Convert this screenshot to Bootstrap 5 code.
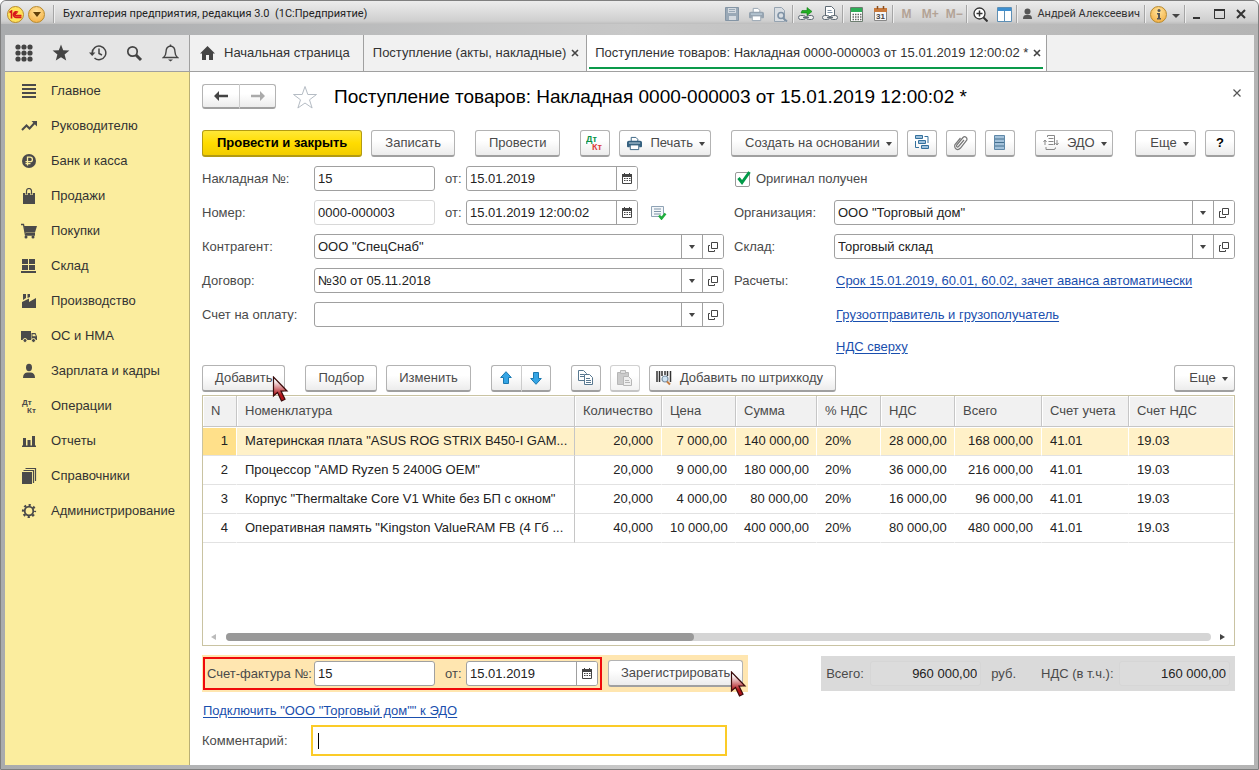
<!DOCTYPE html>
<html lang="ru">
<head>
<meta charset="utf-8">
<meta name="viewport" content="width=device-width, initial-scale=1">
<title>Бухгалтерия предприятия, редакция 3.0</title>
<link href="https://cdn.jsdelivr.net/npm/bootstrap@5.3.0/dist/css/bootstrap.min.css" rel="stylesheet">
<style>
:root{--ink:#4a4a4a;--line:#a0a0a0;--olive:#c9c3a2;--ui:"Liberation Sans",Arial,sans-serif}
body{font:13px/16px var(--ui);color:#333;background:#fff}
svg{display:block;flex:none}
button{font-family:var(--ui)}
.frame{min-height:100vh;border:1px solid #7f7f7f;border-radius:6px 6px 0 0;padding:0 4px 4px;background:linear-gradient(90deg,#a9abad,#c8c8c8 50%,#b4b4b4)}
.titlebar{height:34px;margin:0 -4px;padding:0 6px 8px;border-radius:5px 5px 0 0;background:linear-gradient(180deg,#ececec 0,#cfcfcf 20px,#bdbdbd 23px,transparent 23px);color:#222;font:11px/16px Roboto,sans-serif}
.round{width:17px;height:17px;border-radius:50%;border:1px solid #b88a2c;background:radial-gradient(circle at 50% 30%,#ffe39a,#f2a93a);display:flex;align-items:center;justify-content:center;padding:0}
.vsep{width:1px;height:18px;background:#a5a5a5;border-right:1px solid #eee;box-sizing:content-box}
.tbtn{border:0;background:none;padding:0;width:24px;height:20px;display:flex;align-items:center;justify-content:center;color:#333;font-family:Roboto,sans-serif}
.win{width:22px}
.mem{font:bold 12px/16px var(--ui);color:#b3a396}
.tabs{background:#f1f1f1;border-bottom:1px solid var(--line);height:37px}
.tools{width:184px;background:#e5e5e5;color:var(--ink)}
.tab{border-left:1px solid var(--line);padding:0 7px 0 9px;gap:5px;color:#333;white-space:nowrap;text-decoration:none}
.tab.home{padding:0 13px 0 10px}
.tab.on{background:#fff;border-right:1px solid var(--line);position:relative;padding:0 5px 0 8px}
.tab.on::after{content:"";position:absolute;left:2px;right:3px;bottom:2px;height:2px;background:#0a9a4a}
.xbtn{border:0;background:none;padding:0;color:#444}
.side{width:185px;background:#fbed9e;border-right:1px solid #b9af75;padding-top:1px}
.side a{height:35px;padding-left:16px;gap:14px;color:#333;text-decoration:none}
.side svg{color:var(--ink)}
.page{background:#fff;padding:12px 19px 9px 12px;min-width:0}
.b{height:27px;padding:0 13px;border:1px solid #b3b3b3;border-bottom:2px solid #a0a0a0;border-radius:3px;background:linear-gradient(#fff 40%,#ececec);color:var(--ink);white-space:nowrap;display:inline-flex;align-items:center;justify-content:center;gap:8px;font-size:13px;line-height:16px;position:relative}
.b.sq{width:30px;padding:0;color:#000}
.b.tight{padding:0 12px}
.b.main{padding:0 14px;background:linear-gradient(#ffe838,#ffdc00 50%,#f2cd00);border-color:#b39b12;color:#000;font-weight:bold}
.b.dropdown-toggle::after{margin:2px 0 0 -2px;border-top:4px solid #444;border-left:3px solid transparent;border-right:3px solid transparent}
.b.dropdown-toggle{padding:0 5px 0 13px}
.b.more{min-width:61px}
.b:disabled{opacity:.6}
.pair .b:first-child{border-radius:3px 0 0 3px;border-right:0}
.pair .b:last-child{border-radius:0 3px 3px 0;border-left-color:#ccc}
.nav2 .b{width:37px;height:25px;padding:0}
h1{font:19px/24px var(--ui);color:#000;margin:0;white-space:nowrap}
.formgrid{display:grid;grid-template-columns:522fr 501fr;column-gap:10px}
.stack9{display:flex;flex-direction:column;gap:9px}
.frow{display:flex;align-items:center;height:25px}
.frow>label,.frow>.cap{color:var(--ink);flex:none;white-space:nowrap}
.l1{width:112px}.l2{width:100px}.ot{width:31px;padding-left:10px}
.fld{display:flex;height:25px;border:1px solid var(--line);border-radius:3px;background:#fff;overflow:hidden}
.fld.ro{border-color:#d8d8d8}
.fld input{border:0;padding:0 3px;flex:1;min-width:0;width:0;outline:0;background:transparent;color:#222}
.fld button{width:20px;border:0;border-left:1px solid var(--line);background:#fff;padding:0;display:flex;align-items:center;justify-content:center;color:#444;flex:none;box-sizing:content-box}
.num{width:121px;flex:none}.date{width:172px;flex:none}
.car{border-top:4px solid #444;border-left:3px solid transparent;border-right:3px solid transparent}
.lnk{color:#1a4fae;text-decoration:underline;text-underline-offset:2px}
.chk{appearance:none;width:17px;height:18px;margin:0 4px 2px 1px;background:url("data:image/svg+xml,%3Csvg xmlns='http://www.w3.org/2000/svg' width='17' height='18'%3E%3Crect x='.5' y='3.5' width='14' height='14' rx='1.5' fill='white' stroke='%23999'/%3E%3Cpath d='M3.5 9l3.5 4.5L14.500 3' fill='none' stroke='%23009a48' stroke-width='3'/%3E%3C/svg%3E") no-repeat}
.gridbox{border:1px solid var(--olive);display:flex;flex-direction:column;flex:1;min-height:251px}
.gridbox table{table-layout:fixed;width:100%;border-collapse:separate;border-spacing:0;margin:0}
.gridbox th{height:31px;background:#f1f1f1;font-weight:normal;color:var(--ink);border-right:1px solid #c6c6c6;border-bottom:1px solid #c6c6c6;box-shadow:inset 1px 1px #fff;padding:0 8px;white-space:nowrap}
.gridbox td{height:29px;padding:0 8px;border-bottom:1px solid #e2e2e2;border-right:1px solid transparent;white-space:nowrap;color:#222}
.gridbox td:nth-child(2){border-right-color:#c6c6c6;padding-right:0}
.gridbox th:last-child{border-right-color:#fff}
.gridbox .sel td{background:#fff1c8;border-right-color:#fff;box-shadow:inset 0 1px #fff}
.gridbox .sel td:nth-child(2){border-right-color:#c6c6c6}
.gridbox .sel td:first-child{background:#ffe08a}
.hbar{height:16px;gap:9px;padding:0 8px}
.track{height:8px;border-radius:4px;background:#d5d5d5;flex:1}
.thumb{height:8px;border-radius:4px;background:#999}
.reg{background:#ffe6b0;height:37px;padding:0 5px 0 1px;gap:6px}
.redbox{border:2px solid #f00a0a;height:33px;padding:0 2px}
.totals{background:#dadada;height:35px;padding:0 5px;color:var(--ink)}
.totals input{width:111px;height:25px;border:1px solid #d6d6d6;border-radius:3px;background:#dcdcdc;text-align:right;padding:0 3px;color:#222}
.comment{width:416px;height:31px;border:2px solid #fbcb28;outline:0;padding:0 6px;background:linear-gradient(#000,#000) 5px 50%/1px 16px no-repeat #fff;caret-color:transparent}
.cur{position:absolute;z-index:2;right:-5px;top:10px;pointer-events:none}
</style>
</head>
<body>
<svg width="0" height="0" class="position-absolute" aria-hidden="true">
<defs>
<linearGradient id="redg" x1="0" y1="0" x2="0" y2="1"><stop offset=".15" stop-color="#fff"/><stop offset=".75" stop-color="#b01218"/></linearGradient>
<symbol id="cursor" viewBox="0 0 17 28"><path d="M1.500 1v19l4-3.500 4 8.500 3.500-1.700-4-8.300h6z" fill="url(#redg)" stroke="#3a0a0a" stroke-width="1.200"/></symbol>
<symbol id="cal" viewBox="0 0 10 11"><path d="M.5 1.500h9v9h-9z" fill="#fff" stroke="#444"/><path d="M0 1h10v3H0zM2 0h1v2H2zM7 0h1v2H7z" fill="#444"/><path d="M2 5.500h6.500M2 7.500h6.500" stroke="#444" stroke-dasharray="1.500 1"/></symbol>
<symbol id="open" viewBox="0 0 10 10"><path d="M3.500.5h6v6h-6zM2 3.500H.5v6h6V8" fill="none" stroke="#444"/></symbol>
<symbol id="x" viewBox="0 0 8 8"><path d="M1 1l6 6M7 1L1 7" stroke="currentColor" stroke-width="1.600"/></symbol>
<symbol id="printer" viewBox="0 0 16 16"><path d="M4.500 6V1.500h5l2 2V6" fill="#fff" stroke="currentColor"/><path d="M2 5h12q2 0 2 2v4q0 1-1 1h-2v-2H3v2H1q-1 0-1-1V7q0-2 2-2z" fill="currentColor"/><path d="M3.500 9.500h9v5h-9z" fill="#fff" stroke="currentColor"/><path d="M2 7.500h12" stroke="#cfe0ec"/></symbol>
<symbol id="uarr" viewBox="0 0 12 14"><path d="M6 .7L11.300 6.500H8.500v6h-5v-6H.7z" fill="#35a5e5" stroke="#1a78b0"/></symbol>
<symbol id="link" viewBox="0 0 16 16"><rect x=".5" y="9.500" width="7" height="4" rx="2" fill="#eee" stroke="#5f6b75"/><rect x="8.500" y="9.500" width="7" height="4" rx="2" fill="#eee" stroke="#5f6b75"/><path d="M5 11.500h6" stroke="#5f6b75" stroke-width="1.500"/></symbol>
</defs></svg>

<div class="frame d-flex flex-column">
<header class="titlebar d-flex align-items-center">
 <span class="round" style="background:#ffe25a"><svg width="13" height="9" viewBox="0 0 13 9" fill="none" stroke="#d8161b" stroke-width="1.600"><path d="M.5 2.500L2.500 1v7.500M9 2.200A2.900 2.900 0 1 0 7 7.500h5.500M8 3.500A1.200 1.200 0 1 0 7 5.600h5.500"/></svg></span>
 <button class="round ms-1" aria-label="Меню"><svg width="8" height="5"><path d="M0 0h8L4 5z" fill="#60400a"/></svg></button>
 <span class="vsep ms-2"></span>
 <span class="ms-2 flex-grow-1">Бухгалтерия предприятия, редакция 3.0&nbsp; (1С:Предприятие)</span>
 <button class="tbtn" aria-label="Сохранить"><svg width="14" height="14"><path d="M.5.5h13v13H.5z" fill="#9aa9b7" stroke="#8495a5"/><path d="M3 1h8v5H3zM4 9h7v4H4z" fill="#d4dae0"/><path d="M4 2.500h6M4 4.500h6" stroke="#9aa9b7"/></svg></button>
 <button class="tbtn" aria-label="Печать" style="color:#95a3b0"><svg width="15" height="15"><use href="#printer"/></svg></button>
 <button class="tbtn" aria-label="Просмотр"><svg width="15" height="15" fill="none" stroke="#95a3b0"><path d="M1.500.5h7l3 3v11h-10z" fill="#d9dee3"/><circle cx="8" cy="8.500" r="3" stroke="#7f92a5" stroke-width="1.600"/><path d="M10 11l4 3.500" stroke="#7f92a5" stroke-width="2"/></svg></button>
 <span class="vsep"></span>
 <button class="tbtn" aria-label="Ссылка"><svg width="16" height="16"><use href="#link"/><path d="M4 4.500h5V1.500l5 4-5 4V7H3z" fill="#22b022" stroke="#0d7a16" stroke-width=".6"/></svg></button>
 <button class="tbtn" aria-label="Получить ссылку"><svg width="16" height="16"><path d="M3.500.5h6l3 3v7h-9z" fill="#fff" stroke="#5f6b75"/><path d="M5.500 4.500h4M5.500 6.500h5" stroke="#7f92a5"/><use href="#link"/></svg></button>
 <span class="vsep"></span>
 <button class="tbtn" aria-label="Калькулятор"><svg width="13" height="15"><path d="M.5.5h12v14H.5z" fill="#fff" stroke="#6d7d70"/><path d="M1 1h11v4H1z" fill="#2cae56"/><path d="M2.500 7.500h9M2.500 10h9M2.500 12.500h9" stroke="#666" stroke-width="1.400" stroke-dasharray="1.500 1"/></svg></button>
 <button class="tbtn" aria-label="Календарь"><svg width="13" height="16"><path d="M.5 2.500h12v12H.5z" fill="#f7f7f7" stroke="#888"/><path d="M0 2h13v4H0z" fill="#c9793a"/><path d="M3.500 0v3M9.500 0v3" stroke="#8a5020" stroke-width="1.500"/><text x="2" y="13" font-size="8" font-weight="bold" font-family="Liberation Sans" fill="#444">31</text></svg></button>
 <span class="vsep"></span>
 <button class="tbtn mem">M</button><button class="tbtn mem">M+</button><button class="tbtn mem">M−</button>
 <span class="vsep"></span>
 <button class="tbtn" aria-label="Масштаб"><svg width="15" height="15" fill="none" stroke="#333"><circle cx="6.500" cy="6.500" r="5.500" fill="#fff" stroke-width="1.300"/><path d="M10.500 10.500l4 4" stroke-width="2"/><path d="M3.500 6.500h6M6.500 3.500v6" stroke-width="1.500"/></svg></button>
 <button class="tbtn" aria-label="Панели"><svg width="15" height="15"><path d="M.5.5h14v14H.5z" fill="#fff" stroke="#5d8fb5"/><path d="M1 1h13v3H1z" fill="#3d8fd0"/><path d="M7.500 4v10" stroke="#5d8fb5"/></svg></button>
 <span class="vsep"></span>
 <button class="tbtn w-auto ms-1"><svg width="11" height="12" fill="#555" class="me-1"><circle cx="5.500" cy="3.500" r="3"/><path d="M1 11q0-4 3-4h3q3 0 3 4z"/></svg>Андрей Алексеевич</button>
 <span class="vsep ms-1 me-1"></span>
 <button class="round" aria-label="О программе"><svg width="6" height="11" fill="#555"><circle cx="3" cy="1.500" r="1.500"/><path d="M1 4h3v5h1v1.500H1V9h1V5.500H1z"/></svg></button>
 <button class="tbtn" style="width:17px" aria-label="Ещё"><svg width="8" height="8"><path d="M0 4h8L4 8z" fill="#444"/></svg></button>
 <span class="vsep"></span>
 <button class="tbtn win" aria-label="Свернуть"><svg width="8" height="10"><path d="M0 8h7v2H0z" fill="#333"/></svg></button>
 <button class="tbtn win" aria-label="Развернуть"><svg width="11" height="10"><path d="M.5 1h10v8.500H.5z" fill="none" stroke="#333"/><path d="M0 0h11v2H0z" fill="#333"/></svg></button>
 <button class="tbtn win" aria-label="Закрыть"><svg width="10" height="10"><path d="M1 1l8 8M9 1L1 9" stroke="#333" stroke-width="2"/></svg></button>
</header>

<nav class="tabs d-flex">
 <div class="tools d-flex align-items-center justify-content-around">
  <button class="xbtn" aria-label="Функции"><svg width="18" height="18" fill="currentColor"><g id="dots"><circle cx="3" cy="3" r="2.600"/><circle cx="9" cy="3" r="2.600"/><circle cx="15" cy="3" r="2.600"/></g><use href="#dots" y="6"/><use href="#dots" y="12"/></svg></button>
  <button class="xbtn" aria-label="Избранное"><svg width="18" height="18" viewBox="0 0 18 18" fill="currentColor"><path d="M9 .5l2.200 5.800 6.200.3-4.800 3.900 1.600 6.100L9 13.200l-5.200 3.400 1.600-6.100L.6 6.600l6.200-.3z"/></svg></button>
  <button class="xbtn" aria-label="История"><svg width="18" height="18" viewBox="0 0 18 18" fill="none" stroke="currentColor" stroke-width="1.500"><path d="M3.200 9A6.800 6.800 0 1 1 5.500 14"/><path d="M10 4.500V9.500l3 1.500"/><path d="M0 8.500h6.400L3.200 12z" fill="currentColor" stroke="none"/></svg></button>
  <button class="xbtn" aria-label="Поиск"><svg width="17" height="17" viewBox="0 0 17 17" fill="none" stroke="currentColor"><circle cx="6.500" cy="6.500" r="4.700" stroke-width="1.700"/><path d="M10 10l5 5" stroke-width="3"/></svg></button>
  <button class="xbtn" aria-label="Оповещения"><svg width="17" height="18" viewBox="0 0 17 18" fill="none" stroke="currentColor" stroke-width="1.400"><path d="M1.500 13.500q2.500-2 2.500-5.500 0-5.500 4.500-6Q13 2.500 13 8q0 3.500 2.500 5.500z"/><path d="M8.500 2V.5"/><path d="M6 15.500h5l-2.500 2z" fill="currentColor" stroke="none"/></svg></button>
 </div>
 <a href="#" class="tab home d-flex align-items-center"><svg width="15" height="14" fill="#444" class="me-1"><path d="M7.500 0L15 7.500h-2V14H9V9H6v5H2V7.500H0z"/></svg>Начальная страница</a>
 <div class="tab d-flex align-items-center">Поступление (акты, накладные) <button class="xbtn" aria-label="Закрыть вкладку"><svg width="8" height="8"><use href="#x"/></svg></button></div>
 <div class="tab on d-flex align-items-center">Поступление товаров: Накладная 0000-000003 от 15.01.2019 12:00:02 * <button class="xbtn" aria-label="Закрыть вкладку"><svg width="8" height="8"><use href="#x"/></svg></button></div>
</nav>

<div class="d-flex flex-grow-1">
<nav class="side flex-shrink-0 d-flex flex-column">
 <a href="#" class="d-flex align-items-center"><svg width="16" height="16" fill="currentColor"><path d="M1 1h14v2H1zM1 5h14v2H1zM1 9h14v2H1zM1 13h14v2H1z"/></svg>Главное</a>
 <a href="#" class="d-flex align-items-center"><svg width="16" height="16"><path d="M1 12l4.500-4.500 3 3L14 4.500" fill="none" stroke="currentColor" stroke-width="2"/><path d="M10.500 3H16v5.500z" fill="currentColor"/></svg>Руководителю</a>
 <a href="#" class="d-flex align-items-center"><svg width="16" height="16" fill="none"><circle cx="8" cy="8" r="7" fill="currentColor"/><path d="M6.500 12.500V4.200h2.700a2.200 2.200 0 0 1 0 4.400H4.500M4.500 10.600h5" stroke="#fbed9e" stroke-width="1.300"/></svg>Банк и касса</a>
 <a href="#" class="d-flex align-items-center"><svg width="16" height="16"><path d="M2 5h12v11H2z" fill="currentColor"/><path d="M5.500 7V3a2.500 2.500 0 0 1 5 0v4" fill="none" stroke="#fbed9e" stroke-width="2.500"/><path d="M5.500 6.500V3a2.500 2.500 0 0 1 5 0v3.500" fill="none" stroke="currentColor" stroke-width="1.200"/></svg>Продажи</a>
 <a href="#" class="d-flex align-items-center"><svg width="16" height="16"><path d="M0 1.500h2.500l2 10.500H14M5 10.500h9" fill="none" stroke="currentColor" stroke-width="1.300"/><path d="M3 3h13l-2 6.500H4z" fill="currentColor"/><circle cx="5" cy="14" r="1.500" fill="currentColor"/><circle cx="12" cy="14" r="1.500" fill="currentColor"/></svg>Покупки</a>
 <a href="#" class="d-flex align-items-center"><svg width="16" height="16" fill="currentColor"><path d="M1 1h6v5H1zM8 1h6v5H8zM1 7h6v5H1zM8 7h6v5H8zM0 13h15v2H0z"/></svg>Склад</a>
 <a href="#" class="d-flex align-items-center"><svg width="16" height="16" fill="currentColor"><path d="M1 15V9l7-3.500V9l7-4v10zM2 1h3v4L2 7zM6.500 1H9v3l-2.500 1z"/></svg>Производство</a>
 <a href="#" class="d-flex align-items-center"><svg width="16" height="16"><path d="M0 3h10v9H0zM10.500 5h4L16 8.500V12h-5.500z" fill="currentColor"/><path d="M11.500 6.200h2.500l.8 2h-3.300z" fill="#fbed9e"/><circle cx="4" cy="12.500" r="2" fill="currentColor" stroke="#fbed9e"/><circle cx="12.500" cy="12.500" r="2" fill="currentColor" stroke="#fbed9e"/></svg>ОС и НМА</a>
 <a href="#" class="d-flex align-items-center"><svg width="16" height="16" fill="currentColor"><ellipse cx="8" cy="4.500" rx="3" ry="3.700"/><path d="M2 15q0-5 4-5.500h4q4 .5 4 5.500z"/></svg>Зарплата и кадры</a>
 <a href="#" class="d-flex align-items-center"><svg width="16" height="16" fill="currentColor" font-family="Liberation Sans" font-weight="bold" font-size="8"><text x="1" y="7">Дт</text><text x="6" y="15">Кт</text></svg>Операции</a>
 <a href="#" class="d-flex align-items-center"><svg width="16" height="16" fill="currentColor"><path d="M1 12.500h14V14H1zM2 5h3v8H2zM6.500 7h3v6h-3zM11 3h3v10h-3z"/></svg>Отчеты</a>
 <a href="#" class="d-flex align-items-center"><svg width="16" height="17"><path d="M1 5h10v12H1z" fill="currentColor"/><path d="M2.500 3.500h10V16M4.500 1.500h10V14" fill="none" stroke="currentColor" stroke-width="1.200"/></svg>Справочники</a>
 <a href="#" class="d-flex align-items-center"><svg width="16" height="16" fill="none" stroke="currentColor"><circle cx="8" cy="8" r="4.300" stroke-width="1.800"/><circle cx="8" cy="8" r="6" stroke-width="2.200" stroke-dasharray="2.200 2.512" stroke-dashoffset="1.100"/></svg>Администрирование</a>
</nav>

<main class="page flex-grow-1 d-flex flex-column">
 <div class="d-flex align-items-center" style="height:25px">
  <div class="pair nav2 d-flex"><button class="b" aria-label="Назад"><svg width="14" height="10"><path d="M0 5l5-5v3.700h9v2.600H5V10z" fill="#444"/></svg></button><button class="b" aria-label="Вперед"><svg width="14" height="10"><path d="M14 5L9 0v3.700H0v2.600h9V10z" fill="#aaa"/></svg></button></div>
  <svg class="ms-3 me-3" width="26" height="24" viewBox="0 0 26 24"><path d="M13 1.500l2.800 8h8.700l-7 5.300 2.600 8.200-7.100-5-7.100 5 2.600-8.200-7-5.300h8.700z" fill="#fff" stroke="#b5bcc4"/></svg>
  <h1>Поступление товаров: Накладная 0000-000003 от 15.01.2019 12:00:02 *</h1>
  <button class="xbtn ms-auto mb-2 d-flex justify-content-center" aria-label="Закрыть" style="margin-right:-6px"><svg width="8" height="8"><path d="M.5.5l7 7M7.500.5l-7 7" stroke="#555" stroke-width="1.200"/></svg></button>
 </div>

 <div class="d-flex" style="margin-top:21px;gap:9px">
  <button class="b main">Провести и закрыть</button>
  <button class="b">Записать</button>
  <button class="b" style="margin-left:11px">Провести</button>
  <button class="b sq" style="margin-left:11px" aria-label="Дт Кт"><svg width="18" height="18" font-family="Liberation Sans" font-weight="bold" font-size="9"><text x="0" y="8" fill="#0a9448">Дт</text><text x="6" y="16" fill="#dd3c3c">Кт</text></svg></button>
  <button class="b dropdown-toggle" style="padding-left:7px"><svg width="15" height="15" style="color:#34607f"><use href="#printer"/></svg>Печать</button>
  <button class="b dropdown-toggle" style="margin-left:11px">Создать на основании</button>
  <button class="b sq" aria-label="Структура"><svg width="16" height="16" fill="#9dc0dc" stroke="#34709c"><path d="M1.500.5h7v3h-7zM4.500 5.500h7v3h-7zM7.500 10.500h7v3h-7z"/><path d="M10.500 1.500h3.500V8M1.500 6v6.500H5" fill="none"/></svg></button>
  <button class="b sq" aria-label="Файлы"><svg width="14" height="16" viewBox="0 0 14 16" fill="none" stroke="#777" stroke-width="1.200"><path d="M10 5l-5.500 6.500q-1 1-1.700.2t0-1.700L9 2.500q1.500-1.500 3-.3t.7 3L6.500 13q-2.300 2.500-4.400 1T1 9.500L6.500 3"/></svg></button>
  <button class="b sq" aria-label="Список"><svg width="11" height="16"><path d="M.5.5h10v14H.5z" fill="#a3c1da" stroke="#5f88a8"/><path d="M1 4h9M1 7.500h9M1 11h9" stroke="#44708f"/></svg></button>
  <button class="b dropdown-toggle" style="margin-left:11px;padding-left:7px"><svg width="16" height="16" fill="none" stroke="#888"><path d="M4.500 2V.5h7V10M3 12v2.500h8q1.500 0 1.500-2M5.500 3.500h5M5.500 6.500h5M5.500 9.500h5"/><path d="M2 10V5M.5 7L2 5l1.500 2M14 5v5m-1.500-2l1.500 2 1.500-2"/></svg>ЭДО</button>
  <button class="b dropdown-toggle more ms-auto">Еще</button>
  <button class="b sq fw-bold">?</button>
 </div>

 <div class="formgrid" style="margin-top:9px">
  <div class="stack9">
   <div class="frow"><label class="l1" for="f1">Накладная №:</label><div class="fld num"><input id="f1" value="15"></div><label class="ot" for="f2">от:</label><div class="fld date"><input id="f2" value="15.01.2019"><button aria-label="Календарь"><svg width="10" height="11"><use href="#cal"/></svg></button></div></div>
   <div class="frow"><label class="l1" for="f3">Номер:</label><div class="fld ro num"><input id="f3" value="0000-000003" readonly></div><label class="ot" for="f4">от:</label><div class="fld date"><input id="f4" value="15.01.2019 12:00:02"><button aria-label="Календарь"><svg width="10" height="11"><use href="#cal"/></svg></button></div><svg style="margin-left:13px" width="16" height="14"><path d="M.5.5h12v10H.5z" fill="#f4f7fa" stroke="#8fa3b5"/><path d="M3 3h7M3 5.500h7M3 8h7" stroke="#7f94a8"/><path d="M8 9.500l2.500 3 4-5" fill="none" stroke="#1fae3c" stroke-width="2.400"/></svg></div>
   <div class="frow"><label class="l1" for="f5">Контрагент:</label><div class="fld flex-grow-1"><input id="f5" value='ООО "СпецСнаб"'><button aria-label="Выбрать"><i class="car"></i></button><button aria-label="Открыть"><svg width="10" height="10"><use href="#open"/></svg></button></div></div>
   <div class="frow"><label class="l1" for="f6">Договор:</label><div class="fld flex-grow-1"><input id="f6" value="№30 от 05.11.2018"><button aria-label="Выбрать"><i class="car"></i></button><button aria-label="Открыть"><svg width="10" height="10"><use href="#open"/></svg></button></div></div>
   <div class="frow"><label class="l1" for="f7">Счет на оплату:</label><div class="fld flex-grow-1"><input id="f7"><button aria-label="Выбрать"><i class="car"></i></button><button aria-label="Открыть"><svg width="10" height="10"><use href="#open"/></svg></button></div></div>
  </div>
  <div class="stack9">
   <div class="frow"><input type="checkbox" class="chk" id="c1" checked><label for="c1">Оригинал получен</label></div>
   <div class="frow"><label class="l2" for="f8">Организация:</label><div class="fld flex-grow-1"><input id="f8" value='ООО "Торговый дом"'><button aria-label="Выбрать"><i class="car"></i></button><button aria-label="Открыть"><svg width="10" height="10"><use href="#open"/></svg></button></div></div>
   <div class="frow"><label class="l2" for="f9">Склад:</label><div class="fld flex-grow-1"><input id="f9" value="Торговый склад"><button aria-label="Выбрать"><i class="car"></i></button><button aria-label="Открыть"><svg width="10" height="10"><use href="#open"/></svg></button></div></div>
   <div class="frow"><span class="cap" style="width:102px">Расчеты:</span><a href="#" class="lnk text-nowrap">Срок 15.01.2019, 60.01, 60.02, зачет аванса автоматически</a></div>
   <div class="frow" style="padding-left:102px"><a href="#" class="lnk">Грузоотправитель и грузополучатель</a></div>
   <div style="padding-left:102px;margin-top:3px"><a href="#" class="lnk">НДС сверху</a></div>
  </div>
 </div>

 <div class="d-flex" style="margin-top:10px;gap:9px">
  <button class="b tight">Добавить<svg class="cur" width="17" height="28"><use href="#cursor"/></svg></button>
  <button class="b tight" style="margin-left:11px">Подбор</button>
  <button class="b tight">Изменить</button>
  <div class="pair d-flex" style="margin-left:11px"><button class="b sq" aria-label="Вверх"><svg width="12" height="14"><use href="#uarr"/></svg></button><button class="b sq" aria-label="Вниз"><svg width="12" height="14" style="transform:rotate(180deg)"><use href="#uarr"/></svg></button></div>
  <button class="b sq" style="margin-left:11px" aria-label="Копировать"><svg width="16" height="16" fill="#fff" stroke="#587890"><path d="M.5.5h5l3 3v7h-8z"/><path d="M6.500 4.500h5l3 3v7h-8z"/><path d="M2 4.500h4M2 6.500h4M8 8.500h4M8 10.500h5M8 12.500h5"/></svg></button>
  <button class="b sq" aria-label="Вставить" disabled><svg width="16" height="16" fill="#aaa" stroke="#888"><path d="M.5 2.500h11v12H.5z"/><path d="M3.500.5h5v3h-5z" fill="#ccc"/><path d="M6.500 6.500h5l3 3v6h-8z" fill="#e5e5e5"/><path d="M8 10.500h4M8 12.500h5"/></svg></button>
  <button class="b" style="padding:0 12px 0 6px"><svg width="16" height="16"><path d="M1 1v11M3.500 1v11M6 1v5M9 1v4M11.500 1v5M14.500 1v11" stroke="#333" stroke-width="1.500"/><circle cx="9" cy="9" r="3" fill="#cfe4f4" stroke="#7d93a6" stroke-width="1.200"/><path d="M11 11.500l3 3" stroke="#c57c40" stroke-width="2"/></svg>Добавить по штрихкоду</button>
  <button class="b dropdown-toggle more ms-auto">Еще</button>
 </div>

 <div class="gridbox" style="margin-top:3px">
  <table>
   <colgroup><col style="width:34px"><col><col style="width:87px"><col style="width:74px"><col style="width:81px"><col style="width:64px"><col style="width:74px"><col style="width:87px"><col style="width:87px"><col style="width:105px"></colgroup>
   <thead><tr><th>N</th><th>Номенклатура</th><th>Количество</th><th>Цена</th><th>Сумма</th><th>% НДС</th><th>НДС</th><th>Всего</th><th>Счет учета</th><th>Счет НДС</th></tr></thead>
   <tbody>
    <tr class="sel"><td class="text-end">1</td><td>Материнская плата "ASUS ROG STRIX B450-I GAM...</td><td class="text-end">20,000</td><td class="text-end">7&nbsp;000,00</td><td class="text-end">140&nbsp;000,00</td><td>20%</td><td class="text-end">28&nbsp;000,00</td><td class="text-end">168&nbsp;000,00</td><td>41.01</td><td>19.03</td></tr>
    <tr><td class="text-end">2</td><td>Процессор "AMD Ryzen 5 2400G OEM"</td><td class="text-end">20,000</td><td class="text-end">9&nbsp;000,00</td><td class="text-end">180&nbsp;000,00</td><td>20%</td><td class="text-end">36&nbsp;000,00</td><td class="text-end">216&nbsp;000,00</td><td>41.01</td><td>19.03</td></tr>
    <tr><td class="text-end">3</td><td>Корпус "Thermaltake Core V1 White без БП с окном"</td><td class="text-end">20,000</td><td class="text-end">4&nbsp;000,00</td><td class="text-end">80&nbsp;000,00</td><td>20%</td><td class="text-end">16&nbsp;000,00</td><td class="text-end">96&nbsp;000,00</td><td>41.01</td><td>19.03</td></tr>
    <tr><td class="text-end">4</td><td>Оперативная память "Kingston ValueRAM FB (4 Гб ...</td><td class="text-end">40,000</td><td class="text-end">10&nbsp;000,00</td><td class="text-end">400&nbsp;000,00</td><td>20%</td><td class="text-end">80&nbsp;000,00</td><td class="text-end">480&nbsp;000,00</td><td>41.01</td><td>19.03</td></tr>
   </tbody>
  </table>
  <div class="hbar d-flex align-items-center mt-auto"><svg width="6" height="6"><path d="M5 0v6L0 3z" fill="#bbb"/></svg><div class="track"><div class="thumb" style="width:47.5%"></div></div><svg width="6" height="6"><path d="M0 0v6l5-3z" fill="#444"/></svg></div>
 </div>

 <div class="d-flex align-items-center justify-content-between" style="margin-top:9px">
  <div class="reg d-flex align-items-center">
   <div class="redbox d-flex align-items-center"><div class="frow"><label for="f10" style="width:107px">Счет-фактура №:</label><div class="fld num"><input id="f10" value="15"></div><label class="ot" for="f11">от:</label><div class="fld" style="width:132px"><input id="f11" value="15.01.2019"><button aria-label="Календарь"><svg width="10" height="11"><use href="#cal"/></svg></button></div></div></div>
   <button class="b tight">Зарегистрировать<svg class="cur" width="17" height="28"><use href="#cursor"/></svg></button>
  </div>
  <div class="totals d-flex align-items-center"><label for="t1" style="width:44px">Всего:</label><input id="t1" value="960&nbsp;000,00" readonly><span style="margin:0 25px 0 10px">руб.</span><label for="t2" style="width:78px">НДС (в т.ч.):</label><input id="t2" value="160&nbsp;000,00" readonly></div>
 </div>
 <div style="margin:11px 0 0 1px"><a href="#" class="lnk">Подключить "ООО "Торговый дом"" к ЭДО</a></div>
 <div class="d-flex align-items-center" style="margin-top:6px"><label for="cm" style="width:109px;color:#4a4a4a">Комментарий:</label><input id="cm" class="comment"></div>
</main>
</div>
</div>
<script src="https://cdn.jsdelivr.net/npm/bootstrap@5.3.0/dist/js/bootstrap.bundle.min.js"></script>
</body>
</html>
